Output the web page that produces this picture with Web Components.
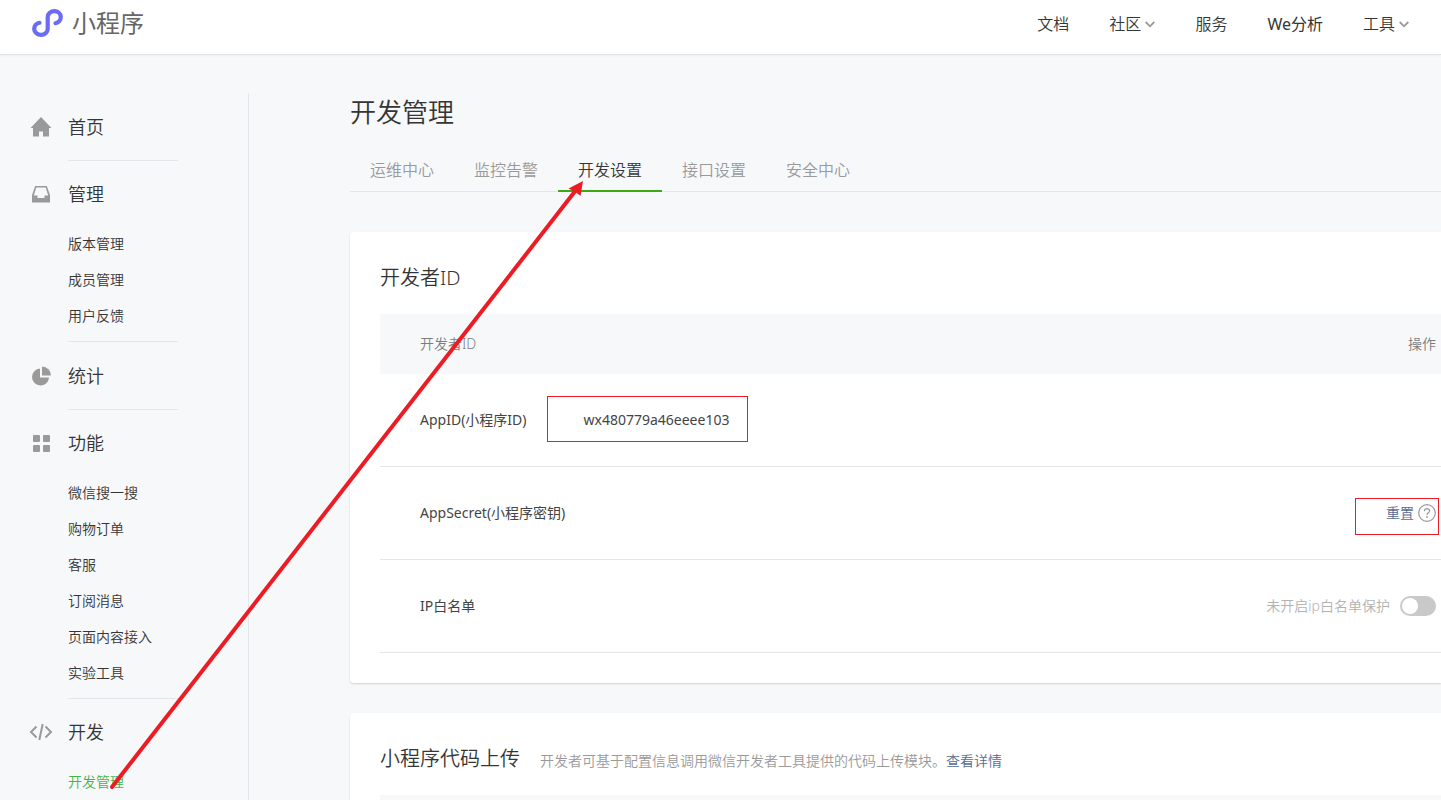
<!DOCTYPE html>
<html lang="zh-CN">
<head>
<meta charset="utf-8">
<title>小程序</title>
<style>
  body {
    margin: 0;
    background: #f7f8fa;
    color: #353535;
    font-family: "Noto Sans", "Noto Sans CJK SC", sans-serif;
    font-weight: 350;
    font-size: 14px;
    line-height: 20px;
    overflow-x: hidden;
  }
</style>
</head>
<body>
<mp-app></mp-app>

<script>
const define = (name, html, setup) => {
  const template = document.createElement('template');
  template.innerHTML = html;
  customElements.define(name, class extends HTMLElement {
    constructor() {
      super();
      this.attachShadow({ mode: 'open' }).append(template.content.cloneNode(true));
    }
    connectedCallback() {
      if (setup) setup(this, this.shadowRoot);
    }
  });
};

const icons = {
  home: '<path d="M11 1 21.500 12H19v8.500h-6V15.500H9v5H3V12H.5z" fill="#9a9a9a"/>',
  box: '<path fill-rule="evenodd" fill="#9a9a9a" d="M5.200 3h11.600L20 12v7.500H2V12zM6.300 4.500 3.800 12.500H7.500V15h7v-2.500h3.700L15.700 4.500z"/>',
  chart: '<path fill="#9a9a9a" d="M10 3.500V12.500h9A8.500 8.500 0 1 1 10 3.500z"/><path fill="#9a9a9a" d="M12 1.500a9 9 0 0 1 9 9h-9z"/>',
  grid: '<g fill="#9a9a9a"><rect x="3" y="3" width="7" height="7" rx="1"/><rect x="13" y="3" width="7" height="7" rx="1"/><rect x="3" y="13" width="7" height="7" rx="1"/><rect x="13" y="13" width="7" height="7" rx="1"/></g>',
  code: '<path fill="none" stroke="#9a9a9a" stroke-width="2" d="M6.500 5.500 1 11l5.500 5.500M15.500 5.500 21 11l-5.500 5.500M12.700 3 9.300 19"/>'
};

define('mp-icon', `
  <style>
    :host { display: block; width: 22px; height: 22px; }
    svg { display: block; overflow: visible; }
  </style>
  <svg width="22" height="22" viewBox="0 0 22 22" aria-hidden="true"></svg>
`, (host, root) => {
  root.querySelector('svg').innerHTML = icons[host.getAttribute('name')];
});

define('top-link', `
  <style>
    :host { display: block; }
    a { display: flex; align-items: center; gap: 4px; color: inherit; text-decoration: none; font-size: 16px; line-height: 24px; }
    svg { display: none; }
    :host([menu]) svg { display: block; }
    :host([latin]) a { font-weight: 400; }
  </style>
  <a href="#"><slot></slot><svg width="10" height="8" viewBox="0 0 10 8" aria-hidden="true"><path d="M.7 2 5 6.300 9.300 2" fill="none" stroke="#9a9a9a" stroke-width="1.800"/></svg></a>
`);

define('top-bar', `
  <style>
    :host { display: block; background: #fff; border-bottom: 1px solid #e0e2e5; box-shadow: 0 1px 2px rgba(0,0,0,.04); }
    header { display: flex; align-items: center; justify-content: space-between; height: 54px; padding: 0 32px; box-sizing: border-box; }
    .logo { display: flex; align-items: center; gap: 9px; padding-bottom: 8px; color: #666; font-size: 24px; line-height: 32px; font-weight: 400; text-decoration: none; }
    nav { display: flex; gap: 40px; padding-bottom: 6px; }
  </style>
  <header>
    <a class="logo" href="#">
      <svg width="31" height="28" viewBox="0 0 31 28" aria-hidden="true"><path d="M23.500 14.200c3.200-.6 5.300-3.100 5.300-6.100 0-3.300-2.900-5.900-6.500-5.900s-6.600 2.600-6.600 5.900v11.800c0 3.300-3 5.900-6.600 5.900S2.200 23.200 2.200 19.900c0-3 2.100-5.500 5.300-6.100" fill="none" stroke="#6b6cf5" stroke-width="4.200" stroke-linecap="round"/></svg>
      <span>小程序</span>
    </a>
    <nav>
      <top-link>文档</top-link>
      <top-link menu>社区</top-link>
      <top-link>服务</top-link>
      <top-link latin>We分析</top-link>
      <top-link menu>工具</top-link>
    </nav>
  </header>
`);

define('side-item', `
  <style>
    :host { display: block; }
    a { display: block; color: inherit; text-decoration: none; line-height: 36px; }
    :host([active]) a { color: #44b549; }
  </style>
  <a href="#"><slot></slot></a>
`);

define('side-group', `
  <style>
    :host { display: block; }
    .head { display: flex; align-items: center; gap: 16px; height: 65px; color: inherit; text-decoration: none; font-size: 18px; }
    .items { margin: 0 70px 0 38px; padding-bottom: 7px; border-bottom: 1px solid #e4e6e9; }
    :host([single]) .head { height: 67px; }
    :host([single]) .items { padding-bottom: 0; }
  </style>
  <a class="head" href="#"><mp-icon></mp-icon><span></span></a>
  <div class="items"><slot></slot></div>
`, (host, root) => {
  const icon = document.createElement('mp-icon');
  icon.setAttribute('name', host.getAttribute('icon'));
  root.querySelector('mp-icon').replaceWith(icon);
  root.querySelector('span').textContent = host.getAttribute('label');
});

define('side-nav', `
  <style>
    :host { display: block; box-sizing: border-box; width: 249px; padding-left: 30px; border-right: 1px solid #e4e6e9; }
  </style>
  <nav>
    <side-group single icon="home" label="首页"></side-group>
    <side-group icon="box" label="管理">
      <side-item>版本管理</side-item>
      <side-item>成员管理</side-item>
      <side-item>用户反馈</side-item>
    </side-group>
    <side-group single icon="chart" label="统计"></side-group>
    <side-group icon="grid" label="功能">
      <side-item>微信搜一搜</side-item>
      <side-item>购物订单</side-item>
      <side-item>客服</side-item>
      <side-item>订阅消息</side-item>
      <side-item>页面内容接入</side-item>
      <side-item>实验工具</side-item>
    </side-group>
    <side-group icon="code" label="开发">
      <side-item active>开发管理</side-item>
    </side-group>
  </nav>
`);

define('tab-link', `
  <style>
    :host { display: block; margin-bottom: -1px; }
    a { display: block; padding: 8px 20px; border-bottom: 2px solid transparent; color: #9a9a9a; text-decoration: none; font-size: 16px; line-height: 24px; }
    :host([active]) a { color: #353535; border-color: #3fa912; }
  </style>
  <a href="#"><slot></slot></a>
`);

define('tab-bar', `
  <style>
    :host { display: flex; border-bottom: 1px solid #e4e6e9; }
  </style>
  <slot></slot>
`);

define('info-card', `
  <style>
    :host { display: block; padding: 30px 0 30px 30px; background: #fff; border-radius: 4px 0 0 4px; box-shadow: 0 1px 2px rgba(0,0,0,.15); }
    header { display: flex; align-items: center; gap: 20px; height: 32px; margin-bottom: 20px; }
    h2 { margin: 0; font-size: 20px; line-height: 32px; font-weight: inherit; }
  </style>
  <header><h2></h2><slot name="note"></slot></header>
  <slot></slot>
`, (host, root) => {
  root.querySelector('h2').textContent = host.getAttribute('heading');
});

define('marked-box', `
  <style>
    :host { display: inline-flex; align-items: center; position: relative; }
    i { position: absolute; inset: var(--mark-inset); border: 1px solid #ed1c24; pointer-events: none; }
  </style>
  <slot></slot><i></i>
`);

define('toggle-switch', `
  <style>
    :host { display: inline-block; }
    label { display: flex; align-items: center; justify-content: flex-end; gap: 10px; color: #b2b2b2; }
    input { appearance: none; width: 36px; height: 20px; margin: 0; padding: 2px; border-radius: 10px; background: #c9c9c9; }
    input::before { content: ""; display: block; width: 16px; height: 16px; border-radius: 50%; background: #fff; }
    input:checked { background: #44b549; }
    input:checked::before { margin-left: 16px; }
  </style>
  <label><slot></slot><input type="checkbox" role="switch"></label>
`);

define('help-button', `
  <style>
    :host { display: block; }
    button { display: block; padding: 0; border: 0; background: none; }
    svg { display: block; }
  </style>
  <button type="button" aria-label="帮助"><svg width="18" height="18" viewBox="0 0 18 18"><circle cx="9" cy="9" r="8.300" fill="none" stroke="#9a9a9a" stroke-width="1.200"/><path d="M6.400 7.200C6.400 5.600 7.500 4.600 9 4.600s2.600 1 2.600 2.300c0 1.900-2.600 2-2.600 4.100" fill="none" stroke="#9a9a9a" stroke-width="1.200"/><circle cx="9" cy="13" r=".9" fill="#9a9a9a"/></svg></button>
`);

define('id-table', `
  <style>
    :host { display: block; }
    table { width: 100%; border-collapse: collapse; }
    th, td { height: 60px; padding: 0 5px 0 40px; text-align: left; font-weight: inherit; }
    th { background: #f7f8fa; color: #7d7d7d; }
    td { height: 92px; border-bottom: 1px solid #e4e6e9; }
    td:first-child { color: #444; font-weight: 400; }
    th:last-child, td:last-child { text-align: right; }
    a { color: #576b95; text-decoration: none; }
    marked-box, toggle-switch { vertical-align: top; }
    .id { margin-left: 57px; --mark-inset: -14px -19px -12px -37px; }
    .reset { gap: 4px; --mark-inset: -5px -3px -12px -31px; }
  </style>
  <table>
    <thead><tr><th>开发者ID</th><th>操作</th></tr></thead>
    <tbody>
      <tr><td>AppID(小程序ID)<marked-box class="id">wx480779a46eeee103</marked-box></td><td></td></tr>
      <tr><td>AppSecret(小程序密钥)</td><td><marked-box class="reset"><a href="#">重置</a><help-button></help-button></marked-box></td></tr>
      <tr><td>IP白名单</td><td><toggle-switch>未开启ip白名单保护</toggle-switch></td></tr>
    </tbody>
  </table>
`);

define('upload-strip', `
  <style>
    :host { display: block; height: 60px; background: #f7f8fa; }
  </style>
`);

define('pointer-arrow', `
  <style>
    :host { position: absolute; left: 0; top: 0; pointer-events: none; }
    svg { display: block; }
  </style>
  <svg width="600" height="800" viewBox="0 0 600 800" aria-hidden="true">
    <path d="M112 787 576 190" stroke="#ed1c24" stroke-width="4" stroke-linecap="round"/>
    <path d="M583 181 580.500 196 575.500 192 568.500 188.500z" fill="#ed1c24"/>
  </svg>
`);

define('mp-app', `
  <style>
    :host { display: block; position: relative; height: 100vh; min-height: 600px; overflow: hidden; }
    .body { display: flex; padding-top: 38px; }
    side-nav { flex: none; }
    main { flex: 1; min-width: 0; padding-left: 101px; }
    h1 { margin: 0 0 19px; font-size: 26px; line-height: 38px; font-weight: inherit; }
    tab-bar { margin-bottom: 40px; }
    info-card { margin-bottom: 30px; }
    p { margin: 0; padding-top: 4px; color: #9a9a9a; }
    p a { color: #576b95; text-decoration: none; }
  </style>
  <top-bar></top-bar>
  <div class="body">
    <side-nav></side-nav>
    <main>
      <h1>开发管理</h1>
      <tab-bar>
        <tab-link>运维中心</tab-link>
        <tab-link>监控告警</tab-link>
        <tab-link active>开发设置</tab-link>
        <tab-link>接口设置</tab-link>
        <tab-link>安全中心</tab-link>
      </tab-bar>
      <info-card heading="开发者ID"><id-table></id-table></info-card>
      <info-card heading="小程序代码上传">
        <p slot="note">开发者可基于配置信息调用微信开发者工具提供的代码上传模块。<a href="#">查看详情</a></p>
        <upload-strip></upload-strip>
      </info-card>
    </main>
  </div>
  <pointer-arrow></pointer-arrow>
`);
</script>
</body>
</html>
